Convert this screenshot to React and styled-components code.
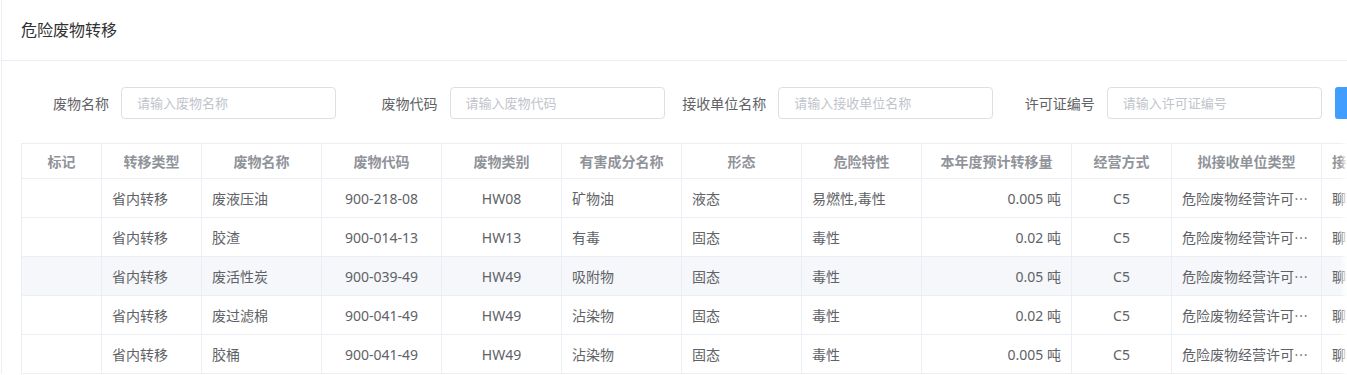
import React from 'react'
import styled, { createGlobalStyle } from 'styled-components'

const GlobalStyle = createGlobalStyle`
    html, body {
        margin: 0;
        padding: 0;
        background: #ffffff;
        overflow: hidden;
    }
    body {
        font-family: "Noto Sans", "Noto Sans CJK SC", sans-serif;
        color: #606266;
    }
`

const Page = styled.div`
    padding-left: 1px;
    width: 1600px;
    position: relative;
`

const Card = styled.div`
    border-left: 1px solid #ebeef5;
    background: #fff;
`

const CardHeader = styled.div`
    padding: 18px 19px;
    height: 24px;
    border-bottom: 1px solid #ebeef5;
    font-size: 16px;
    line-height: 24px;
    color: #303133;
`

const CardBody = styled.div`
    padding: 26px 19px 0;
`

const SearchForm = styled.div`
    display: flex;
    align-items: center;
    margin-bottom: 24px;
`

const FormItem = styled.div`
    display: flex;
    align-items: center;
    margin-right: 13.6px;
`

const Label = styled.label`
    width: 100px;
    padding-right: 12px;
    box-sizing: border-box;
    text-align: right;
    font-size: 14px;
    color: #606266;
    white-space: nowrap;
`

const Input = styled.input`
    width: 215px;
    height: 32px;
    box-sizing: border-box;
    border: 1px solid #dcdfe6;
    border-radius: 4px;
    padding: 0 15px;
    font-family: inherit;
    font-size: 13px;
    color: #606266;
    outline: none;
    &::placeholder {
        color: #c0c4cc;
    }
`

const SearchButton = styled.button`
    height: 32px;
    width: 68px;
    border: none;
    border-radius: 3px;
    background: #409eff;
    color: #fff;
    font-family: inherit;
    font-size: 13px;
`

const TableWrap = styled.div`
    position: relative;
`

const Table = styled.table`
    table-layout: fixed;
    width: ${(p) => p.$width}px;
    border-collapse: separate;
    border-spacing: 0;
    border-top: 1px solid #ebeef5;
    border-left: 1px solid #ebeef5;
    font-size: 14px;
`

const Th = styled.th`
    box-sizing: border-box;
    height: 35px;
    padding: 0 10px;
    border-right: 1px solid #ebeef5;
    border-bottom: 1px solid #ebeef5;
    color: #909399;
    font-weight: 700;
    text-align: center;
    white-space: nowrap;
    overflow: hidden;
    text-overflow: ellipsis;
`

const Row = styled.tr`
    background: ${(p) => (p.$hover ? '#f5f7fa' : '#fff')};
`

const Td = styled.td`
    box-sizing: border-box;
    height: 39px;
    padding: 0 10px;
    border-right: 1px solid #ebeef5;
    border-bottom: 1px solid #ebeef5;
    color: #606266;
    font-family: ${(p) => (p.$cjk ? '"Noto Sans CJK SC", sans-serif' : 'inherit')};
    text-align: ${(p) => p.$align || 'left'};
    white-space: nowrap;
    overflow: hidden;
    text-overflow: ellipsis;
`

const EdgeFade = styled.div`
    position: fixed;
    top: 140px;
    bottom: 0;
    left: 1339px;
    width: 8px;
    background: linear-gradient(to right, rgba(255, 255, 255, 0), rgba(255, 255, 255, 0.85));
    pointer-events: none;
`

const columns = [
    { key: 'mark', title: '标记', width: 80, align: 'left' },
    { key: 'type', title: '转移类型', width: 100, align: 'left' },
    { key: 'name', title: '废物名称', width: 120, align: 'left' },
    { key: 'code', title: '废物代码', width: 120, align: 'center' },
    { key: 'cat', title: '废物类别', width: 120, align: 'center' },
    { key: 'harm', title: '有害成分名称', width: 120, align: 'left' },
    { key: 'form', title: '形态', width: 120, align: 'left' },
    { key: 'danger', title: '危险特性', width: 120, align: 'left' },
    { key: 'amount', title: '本年度预计转移量', width: 150, align: 'right' },
    { key: 'mode', title: '经营方式', width: 100, align: 'center' },
    { key: 'unitType', title: '拟接收单位类型', width: 150, align: 'left', cjk: true },
    { key: 'unit', title: '接收单位名称及许可证编号', width: 180, align: 'left', cjk: true },
]

const tableWidth = columns.reduce((sum, c) => sum + c.width, 0)

const rows = [
    { name: '废液压油', code: '900-218-08', cat: 'HW08', harm: '矿物油', form: '液态', danger: '易燃性,毒性', amount: '0.005 吨' },
    { name: '胶渣', code: '900-014-13', cat: 'HW13', harm: '有毒', form: '固态', danger: '毒性', amount: '0.02 吨' },
    { name: '废活性炭', code: '900-039-49', cat: 'HW49', harm: '吸附物', form: '固态', danger: '毒性', amount: '0.05 吨' },
    { name: '废过滤棉', code: '900-041-49', cat: 'HW49', harm: '沾染物', form: '固态', danger: '毒性', amount: '0.02 吨' },
    { name: '胶桶', code: '900-041-49', cat: 'HW49', harm: '沾染物', form: '固态', danger: '毒性', amount: '0.005 吨' },
].map((r) => ({
    mark: '',
    type: '省内转移',
    mode: 'C5',
    unitType: '危险废物经营许可证单位',
    unit: '聊城市环保科技有限公司',
    ...r,
}))

const filters = [
    { label: '废物名称', placeholder: '请输入废物名称' },
    { label: '废物代码', placeholder: '请输入废物代码' },
    { label: '接收单位名称', placeholder: '请输入接收单位名称' },
    { label: '许可证编号', placeholder: '请输入许可证编号' },
]

const App = () => {
    return (
        <>
            <GlobalStyle />
            <Page>
                <Card>
                    <CardHeader>危险废物转移</CardHeader>
                    <CardBody>
                        <SearchForm>
                            {filters.map((f) => (
                                <FormItem key={f.label}>
                                    <Label>{f.label}</Label>
                                    <Input placeholder={f.placeholder} />
                                </FormItem>
                            ))}
                            <SearchButton>查询</SearchButton>
                        </SearchForm>
                        <TableWrap>
                            <Table $width={tableWidth}>
                                <colgroup>
                                    {columns.map((c) => (
                                        <col key={c.key} style={{ width: c.width }} />
                                    ))}
                                </colgroup>
                                <thead>
                                    <tr>
                                        {columns.map((c) => (
                                            <Th key={c.key}>{c.title}</Th>
                                        ))}
                                    </tr>
                                </thead>
                                <tbody>
                                    {rows.map((r, i) => (
                                        <Row key={i} $hover={i === 2}>
                                            {columns.map((c) => (
                                                <Td key={c.key} $align={c.align} $cjk={c.cjk}>{r[c.key]}</Td>
                                            ))}
                                        </Row>
                                    ))}
                                </tbody>
                            </Table>
                        </TableWrap>
                    </CardBody>
                </Card>
                <EdgeFade />
            </Page>
        </>
    )
}

export default App
